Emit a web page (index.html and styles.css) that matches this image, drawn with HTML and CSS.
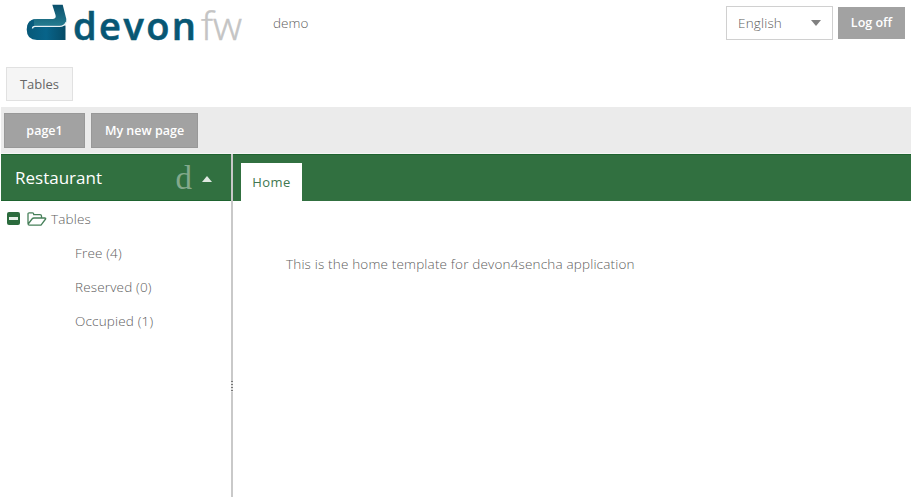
FILE: index.html
```html
<!DOCTYPE html>
<html lang="en">
<head>
<meta charset="utf-8">
<title>devonfw demo</title>
<link rel="stylesheet" href="styles.css">
</head>
<body>
<div class="app">
  <header class="header">
    <svg class="logo" width="226" height="58" viewBox="0 0 226 58" role="img" aria-label="devonfw">
      <defs>
        <linearGradient id="mark" x1="0" y1="0" x2="1" y2="0"><stop offset="0" stop-color="#075878"/><stop offset=".5" stop-color="#08648a"/><stop offset="1" stop-color="#064b66"/></linearGradient>
        <linearGradient id="stem" x1="0" y1="0" x2="0" y2="1"><stop offset="0" stop-color="#0b506c"/><stop offset="1" stop-color="#257d91"/></linearGradient>
      </defs>
      <path d="M17 19H33Q36.500 18.500 35.500 15L32.300 4.700H42.700L46.300 19Q47 26.500 40 26.500H10Q8 26.500 8 24Q10 19 17 19Z" fill="url(#stem)"/>
      <path d="M17 19Q6.700 19 6.700 29.500Q6.700 40 17 40H45.500V25.500H14V19Z" fill="url(#mark)"/>
      <path d="M12.500 28.500Q12.500 26.300 15 26.300H39.500Q44.500 26.300 46.300 22" fill="none" stroke="#e9f3f5" stroke-width="1.300"/>
      <text class="logo-devon" x="53" y="40" textLength="123" lengthAdjust="spacing">devon</text>
      <text class="logo-fw" x="181" y="40" textLength="41" lengthAdjust="spacingAndGlyphs">fw</text>
    </svg>
    <span class="app-name">demo</span>
    <div class="language"><span>English</span><i class="caret-down"></i></div>
    <button class="button logoff">Log off</button>
  </header>
  <nav class="menu"><button class="menu-item">Tables</button></nav>
  <div class="toolbar">
    <button class="button page">page1</button>
    <button class="button new-page">My new page</button>
  </div>
  <main class="workspace">
    <aside class="sidebar">
      <div class="panel-title"><span>Restaurant</span><span class="glyph">d</span><i class="caret-up"></i></div>
      <ul class="tree">
        <li class="node root">
          <svg class="toggle" width="13" height="13" viewBox="0 0 13 13"><rect width="13" height="13" rx="2" fill="#2b6b3d"/><path d="M2 5h9v3H2z" fill="#e5eee7"/></svg>
          <svg class="folder" width="20" height="14" viewBox="0 0 20 14" fill="none" stroke="#47805a" stroke-width="1.300" stroke-linejoin="round"><path d="M1 11.500V2Q1 .8 2.200 .8H5.500Q6.700 .8 6.700 2V2.700H13Q14.500 2.700 14.500 4V6M1 11.500Q1 13.200 2.500 13.200H14L18.600 7Q19 6 17.800 6H7Q5.800 6 5 7L1.200 12"/></svg>
          <span>Tables</span>
        </li>
        <li class="node leaf">Free (4)</li>
        <li class="node leaf">Reserved (0)</li>
        <li class="node leaf">Occupied (1)</li>
      </ul>
    </aside>
    <div class="splitter"><i class="grip"></i></div>
    <section class="content">
      <div class="tabs"><div class="tab">Home</div></div>
      <p class="message">This is the home template for devon4sencha application</p>
    </section>
  </main>
</div>
</body>
</html>
```
FILE: styles.css
```css
* { box-sizing: border-box; }
body { margin: 0; background: #fff; overflow: hidden; color: #606060; font: 300 13.5px/20px "Open Sans", sans-serif; letter-spacing: .17px; }
button { font: inherit; padding: 0; letter-spacing: 0; }
.app { width: 911px; height: 497px; padding-left: 1px; display: flex; flex-direction: column; }
.header { height: 60px; display: flex; align-items: flex-start; padding: 0 6px 0 19px; }
.logo { flex: none; letter-spacing: 0; }
.logo-devon { font: 600 38px "Open Sans", sans-serif; fill: #075774; stroke: #075774; stroke-width: .6px; }
.logo-fw { font: 300 38px "Open Sans", sans-serif; fill: #c4c4c4; stroke: #c4c4c4; stroke-width: .5px; }
.app-name { margin: 13px auto 0 27px; letter-spacing: 0; }
.language { width: 107px; height: 34px; margin-top: 6px; border: 1px solid #d0d0d0; padding: 0 11px; display: flex; align-items: center; justify-content: space-between; }
.caret-down { border: 5px solid transparent; border-top: 6px solid #808080; border-bottom: 0; }
.button { background: #a2a2a2; color: #fff; border: 1px solid #989898; font-weight: 600; font-size: 12.5px; }
.logoff { width: 67px; height: 32px; margin: 7px 0 0 5px; border-color: #a2a2a2; }
.menu { height: 47px; padding: 7px 5px; }
.menu-item { display: block; width: 67px; height: 34px; background: #f5f5f5; border: 1px solid #e1e1e1; color: #666; font-weight: 400; font-size: 13px; }
.toolbar { height: 47px; background: #ebebeb; display: flex; gap: 6px; padding: 6px 3px; border-bottom: 1px solid #f5f5f5; }
.toolbar .button { height: 35px; }
.page { width: 81px; }
.new-page { width: 107px; }
.workspace { flex: 1; display: flex; min-height: 0; }
.sidebar { width: 230px; }
.panel-title { height: 47px; background: #317040; border-top: 1px solid #1e632f; border-bottom: 1px solid #1e632f; color: #fff; display: flex; align-items: center; padding: 0 19px 0 14px; font-size: 17px; font-weight: 400; letter-spacing: 0; }
.glyph { margin-left: auto; font: 33px/40px "Liberation Serif", serif; color: #83a98c; }
.caret-up { margin: 3px 0 0 10px; border: 5px solid transparent; border-bottom: 6px solid #e0e9e2; border-top: 0; }
.tree { list-style: none; margin: 0; padding: 1px 0 0; }
.node { height: 34px; display: flex; align-items: center; }
.root { padding-left: 6px; }
.toggle { margin-top: -1px; }
.folder { margin: -1px 4px 0 7px; }
.leaf { padding-left: 74px; }
.splitter { width: 2px; background: #c9c9c9; display: flex; align-items: center; }
.grip { width: 2px; height: 11px; margin-top: 122px; background: repeating-linear-gradient(#777 0 1px, #ddd 1px 3px); }
.content { flex: 1; }
.tabs { height: 47px; background: #317040; border-top: 1px solid #1e632f; padding: 8px 8px 0; }
.tab { width: 61px; height: 38px; background: #fff; color: #417750; font-size: 13px; font-weight: 400; letter-spacing: .5px; text-align: center; line-height: 39px; }
.message { margin: 53px 0 0 53px; }
```
